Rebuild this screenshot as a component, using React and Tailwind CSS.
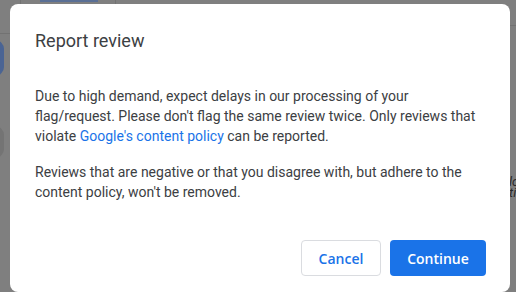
export default function App() {
  return (
    <div className="relative w-[516px] h-[292px] overflow-hidden bg-[#7f7f7f]" style={{ fontFamily: 'Roboto, "Liberation Sans", sans-serif' }}>
      {/* page behind the scrim */}
      <div className="absolute left-0 top-[33px] w-[12px] h-px bg-[#727272]" />
      <div className="absolute right-0 top-[25px] w-[8px] h-px bg-[#727272]" />
      <div className="absolute left-[20px] top-0 w-px h-[5px] bg-[#727272]" />
      <div className="absolute left-[115px] top-0 w-px h-[5px] bg-[#727272]" />
      <div className="absolute left-[40px] top-0 w-[58px] h-[2px] bg-[#5a6f95]" />
      <div className="absolute -left-[14px] top-[40px] w-[18px] h-[36px] rounded-full bg-[#4a6494]" />
      <div className="absolute -left-[14px] top-[126px] w-[18px] h-[32px] rounded-full bg-[#747474]" />
      <div className="absolute left-[509px] top-[176px] text-[13px] leading-[11px] italic text-[#2a2a2a]">
        <div>lo</div>
        <div>ti</div>
      </div>

      <div className="relative pt-[4px] pl-[10px] pr-[6px]">
        <div className="bg-white rounded-[8px] pt-[25px] pb-[16px]">
          <h2 className="px-[25px] text-[18px] leading-[24px] text-[#3c4043]">Report review</h2>
          <div className="px-[25px] mt-[33px] text-[14px] leading-[20px] text-[#3c4043]">
            <p>
              Due to high demand, expect delays in our processing of your flag/request. Please don't flag the same review twice. Only reviews that violate <span className="text-[#1a73e8]">Google's content policy</span> can be reported.
            </p>
            <p className="mt-[16px]">
              Reviews that are negative or that you disagree with, but adhere to the content policy, won't be removed.
            </p>
          </div>
          <div className="flex justify-end gap-[9px] px-[24px] mt-[38px]" style={{ fontFamily: '"Open Sans", sans-serif' }}>
            <button className="w-[80px] h-[36px] rounded-[4px] border border-[#dadce0] bg-white text-[14px] font-semibold text-[#1a73e8]">
              Cancel
            </button>
            <button className="w-[96px] h-[36px] rounded-[4px] bg-[#1a73e8] text-[14px] font-semibold text-white">
              Continue
            </button>
          </div>
        </div>
      </div>
    </div>
  )
}
